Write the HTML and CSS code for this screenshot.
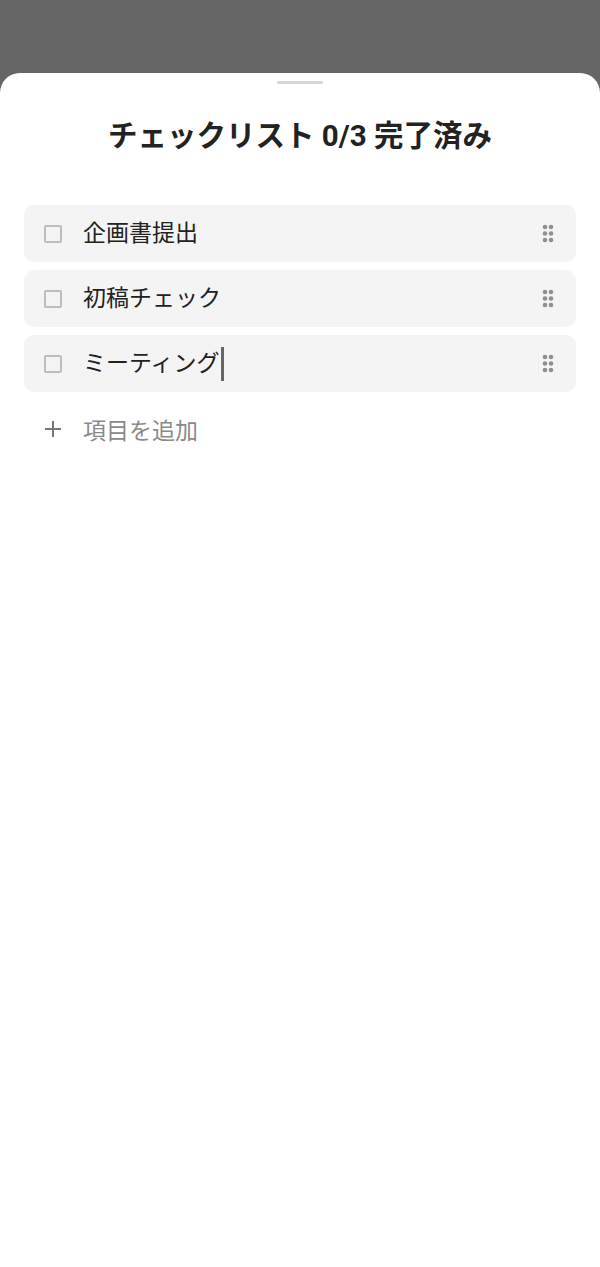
FILE: index.html
```html
<!DOCTYPE html>
<html lang="ja">
<head>
  <meta charset="UTF-8" />
  <meta name="viewport" content="width=device-width, initial-scale=1.0" />
  <title>チェックリスト</title>
  <link rel="stylesheet" href="styles.css">
</head>
<body>

<div class="sheet">
  <div class="handle"></div>

  <h1>チェックリスト 0/3 完了済み</h1>

  <ul class="list">
    <li class="item">
      <span class="box"></span>
      <span class="label">企画書提出</span>
      <svg class="grip" width="12" height="19" viewBox="0 0 12 19">
        <circle cx="3" cy="3" r="2.3" /><circle cx="9" cy="3" r="2.3" />
        <circle cx="3" cy="9.5" r="2.3" /><circle cx="9" cy="9.5" r="2.3" />
        <circle cx="3" cy="16" r="2.3" /><circle cx="9" cy="16" r="2.3" />
      </svg>
    </li>
    <li class="item">
      <span class="box"></span>
      <span class="label">初稿チェック</span>
      <svg class="grip" width="12" height="19" viewBox="0 0 12 19">
        <circle cx="3" cy="3" r="2.3" /><circle cx="9" cy="3" r="2.3" />
        <circle cx="3" cy="9.5" r="2.3" /><circle cx="9" cy="9.5" r="2.3" />
        <circle cx="3" cy="16" r="2.3" /><circle cx="9" cy="16" r="2.3" />
      </svg>
    </li>
    <li class="item">
      <span class="box"></span>
      <span class="label">ミーティング<span class="caret"></span></span>
      <svg class="grip" width="12" height="19" viewBox="0 0 12 19">
        <circle cx="3" cy="3" r="2.3" /><circle cx="9" cy="3" r="2.3" />
        <circle cx="3" cy="9.5" r="2.3" /><circle cx="9" cy="9.5" r="2.3" />
        <circle cx="3" cy="16" r="2.3" /><circle cx="9" cy="16" r="2.3" />
      </svg>
    </li>
  </ul>

  <div class="add">
    <svg class="plus" width="18" height="18" viewBox="0 0 18 18">
      <path d="M9 1v16M1 9h16" stroke="#777" stroke-width="2" fill="none" />
    </svg>
    <span class="add-label">項目を追加</span>
  </div>
</div>

</body>
</html>
```

FILE: styles.css
```css
html, body {
  margin: 0;
  padding: 0;
}

body {
  font-family: Roboto, "Noto Sans CJK JP", sans-serif;
  background-color: #666;
  color: #222;
  height: 1267px;
  overflow: hidden;
}

.sheet {
  margin-top: 73px;
  height: 1194px;
  background-color: #fff;
  border-radius: 20px 20px 0 0;
  padding: 0 24px;
  box-sizing: border-box;
}

.handle {
  width: 46px;
  height: 3px;
  margin: 0 auto;
  position: relative;
  top: 8px;
  background-color: #d6d6d6;
  border-radius: 2px;
}

h1 {
  margin: 0;
  padding-top: 38px;
  height: 129px;
  box-sizing: border-box;
  text-align: center;
  font-size: 29.5px;
  font-weight: 700;
  line-height: 44px;
  color: #222;
}

.list {
  list-style: none;
  margin: 0;
  padding: 0;
  display: flex;
  flex-direction: column;
  gap: 8px;
}

.item {
  display: flex;
  align-items: center;
  height: 57px;
  padding: 0 20px;
  background-color: #f4f4f4;
  border-radius: 10px;
}

.box {
  width: 14px;
  height: 14px;
  border: 2px solid #bdbdbd;
  border-radius: 2px;
  flex-shrink: 0;
}

.label {
  flex: 1;
  margin-left: 21px;
  font-size: 23px;
  line-height: 34px;
  color: #222;
  display: flex;
  align-items: center;
}

.caret {
  display: inline-block;
  width: 3px;
  height: 34px;
  margin-left: 1px;
  background-color: #666;
}

.grip {
  fill: #8f8f8f;
  margin-right: 2px;
}

.add {
  display: flex;
  align-items: center;
  height: 58px;
  margin-top: 8px;
  padding: 0 20px;
}

.add-label {
  margin-left: 21px;
  font-size: 23px;
  color: #8a8a8a;
}
```
